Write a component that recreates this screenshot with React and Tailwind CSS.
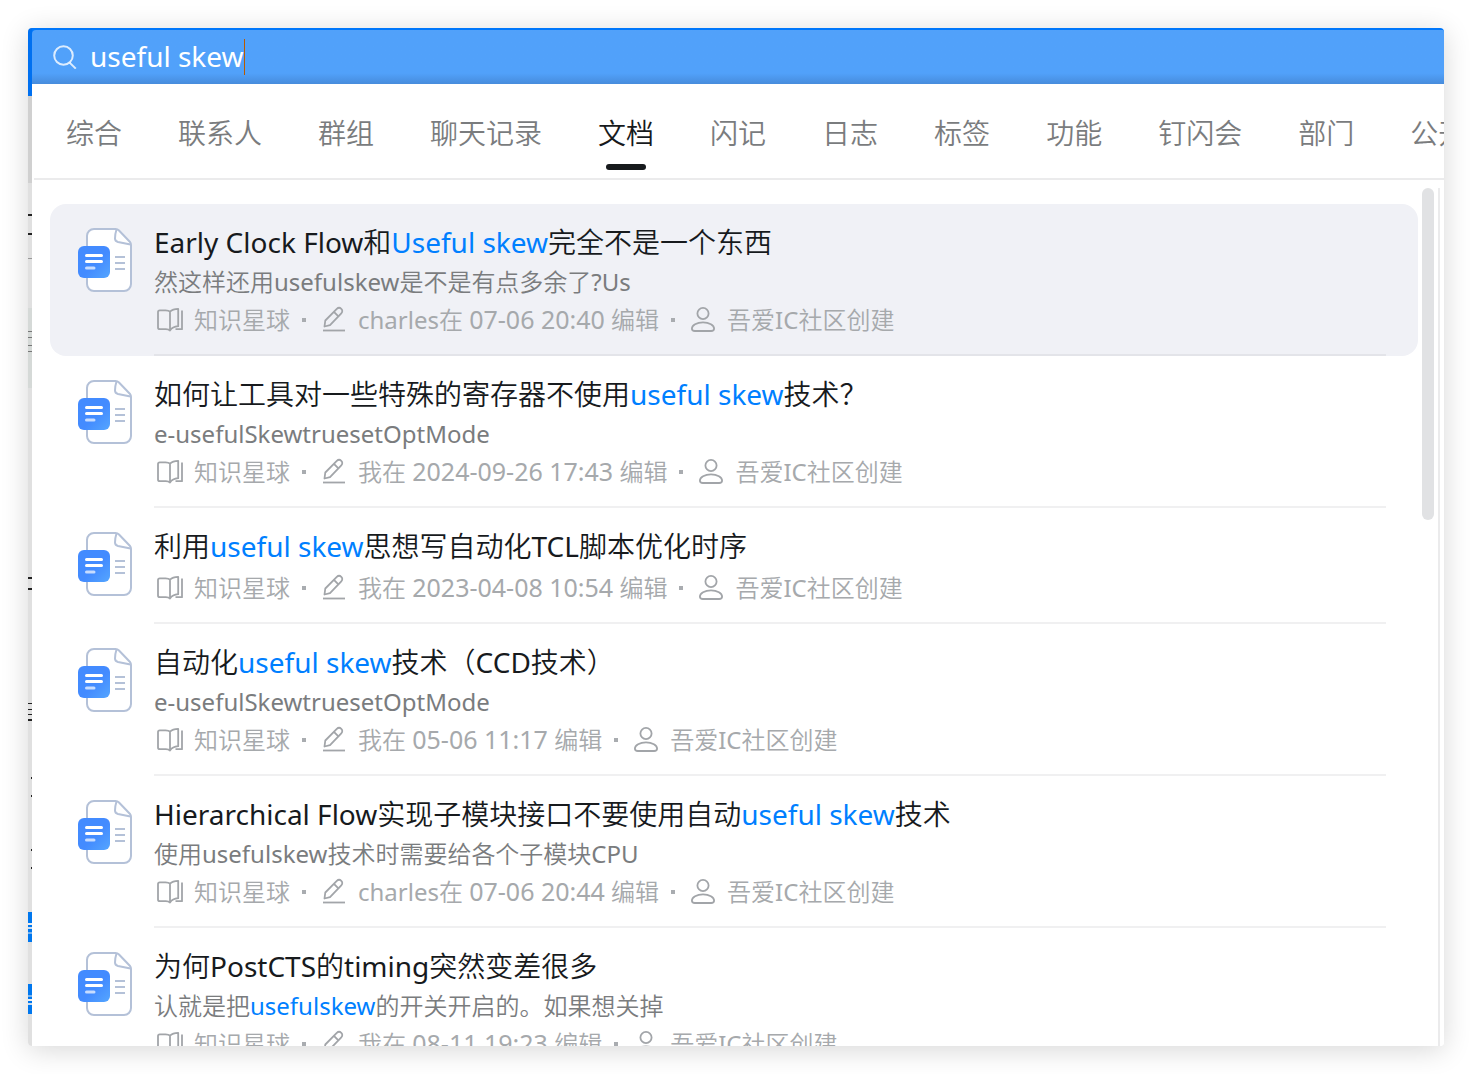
const LATIN_CJK = "font-['Noto_Sans','Noto_Sans_CJK_SC_DemiLight','Noto_Sans_CJK_SC',sans-serif]";

const tabs = ['综合', '联系人', '群组', '聊天记录', '文档', '闪记', '日志', '标签', '功能', '钉闪会', '部门', '公开群'];

const results = [
  {
    title: ['Early Clock Flow和', 'Useful skew', '完全不是一个东西'],
    snippet: ['然这样还用usefulskew是不是有点多余了?Us'],
    editor: 'charles在',
    time: '07-06 20:40',
    active: true,
  },
  {
    title: ['如何让工具对一些特殊的寄存器不使用', 'useful skew', '技术？'],
    snippet: ['e-usefulSkewtruesetOptMode'],
    editor: '我在',
    time: '2024-09-26 17:43',
  },
  {
    title: ['利用', 'useful skew', '思想写自动化TCL脚本优化时序'],
    editor: '我在',
    time: '2023-04-08 10:54',
  },
  {
    title: ['自动化', 'useful skew', '技术（CCD技术）'],
    snippet: ['e-usefulSkewtruesetOptMode'],
    editor: '我在',
    time: '05-06 11:17',
  },
  {
    title: ['Hierarchical Flow实现子模块接口不要使用自动', 'useful skew', '技术'],
    snippet: ['使用usefulskew技术时需要给各个子模块CPU'],
    editor: 'charles在',
    time: '07-06 20:44',
  },
  {
    title: ['为何PostCTS的timing突然变差很多'],
    snippet: ['认就是把', 'usefulskew', '的开关开启的。如果想关掉'],
    editor: '我在',
    time: '08-11 19:23',
  },
];

function SearchIcon() {
  return (
    <svg className="size-6 shrink-0" viewBox="0 0 24 24" fill="none" stroke="#fff" strokeOpacity="0.8" strokeWidth="2" aria-hidden="true">
      <circle cx="10.5" cy="10.5" r="9.3" />
      <path d="M16.6 17.6l6.2 6" />
    </svg>
  );
}

function DocIcon({ id }) {
  return (
    <svg className="h-16 w-14 shrink-0" viewBox="0 0 56 64" aria-hidden="true">
      <defs>
        <linearGradient id={id} x1="0" y1="0" x2="1" y2="1">
          <stop offset="0.55" stopColor="#438bff" />
          <stop offset="1" stopColor="#55a6ff" />
        </linearGradient>
      </defs>
      <path d="M16 1H37.500Q39.500 1 41 2.500L52 14Q53 15.200 53 17V56a7 7 0 0 1-7 7H16a7 7 0 0 1-7-7V8a7 7 0 0 1 7-7Z" fill="#fff" stroke="#b4c1d8" strokeWidth="2" />
      <path d="M38.500 1.500C37.500 4.500 37 7 37 10.500C37 12.500 38 13.500 40 14L52.500 16.500" fill="none" stroke="#b4c1d8" strokeWidth="2" strokeLinejoin="round" />
      <path d="M37 29h10M37 35h10M37 41h10" stroke="#b4c1d8" strokeWidth="2" />
      <rect y="18" width="32" height="32" rx="6" fill={`url(#${id})`} />
      <path d="M8.500 27.500h15M8.500 33.500h15" stroke="#fff" strokeWidth="3" strokeLinecap="round" />
      <path d="M8.500 40h7.500" stroke="#fff" strokeOpacity="0.7" strokeWidth="3" strokeLinecap="round" />
    </svg>
  );
}

const metaIcon = 'size-7 shrink-0';

function BookIcon() {
  return (
    <svg className={metaIcon} viewBox="0 0 28 28" fill="none" stroke="#a2a5a9" strokeWidth="1.800" strokeLinejoin="round" aria-hidden="true">
      <path d="M14 5.700c-1-1-2.500-1.300-4.500-1.300H3.800c-1 0-1.800.6-1.800 1.600v15.500c0 1 .8 1.700 1.800 1.700h6c1.800 0 3.200.3 4.200 1.300" />
      <path d="M14 5.700c1.800-1.800 4.600-2.700 8.200-2.800v17.300c-3.600.3-6.400 1.500-8.200 4.300Z" />
      <path d="M26 4.500v18.700h-6.500" />
    </svg>
  );
}

function PencilIcon() {
  return (
    <svg className={metaIcon} viewBox="0 0 28 28" fill="none" stroke="#a2a5a9" strokeWidth="1.800" strokeLinejoin="round" aria-hidden="true">
      <path d="M4.500 20.500l.8-6L16.800 2.900c1.400-1.400 3.200-1.300 4.500-.1s1.300 3.100 0 4.500L10 19.100Z" />
      <path d="M13.900 5.900l4.500 4.500" />
      <path d="M3 24.500h22" />
    </svg>
  );
}

function PersonIcon() {
  return (
    <svg className={metaIcon} viewBox="0 0 28 28" fill="none" stroke="#a2a5a9" strokeWidth="1.800" aria-hidden="true">
      <circle cx="14" cy="7.500" r="5.600" />
      <path d="M14 16.300c-6.300 0-11.100 3-11.100 6.200 0 1.800 1.400 2.500 3 2.500h16.200c1.600 0 3-.7 3-2.500 0-3.200-4.800-6.200-11.100-6.200Z" />
    </svg>
  );
}

function Highlighted({ parts }) {
  return parts.map((part, i) =>
    i === 1 ? (
      <mark key={i} className="bg-transparent text-[#007fff]">{part}</mark>
    ) : (
      <span key={i}>{part}</span>
    ),
  );
}

function Dot() {
  return <span className="mr-3.5 ml-3 size-1 shrink-0 bg-[#a9acb0]" />;
}

function ResultItem({ item, index }) {
  return (
    <li>
      <a href="#result" className={`flex gap-5 rounded-2xl pr-8 pl-7 ${item.active ? 'bg-[#f0f1f6]' : ''}`}>
        <span className="pt-6">
          <DocIcon id={`doc-fill-${index}`} />
        </span>
        <span className={`flex min-w-0 grow flex-col border-b-2 pt-4.5 pb-3.5 ${item.active ? 'border-[#e3e4e9]' : 'border-[#f0f0f1]'}`}>
          <span className="mb-0.5 truncate text-[28px] leading-10 text-[#171a1d]">
            <Highlighted parts={item.title} />
          </span>
          {item.snippet && (
            <span className="truncate text-2xl leading-9 text-[#7a7c7e]">
              <Highlighted parts={item.snippet} />
            </span>
          )}
          <span className="ml-0.5 flex h-10 items-center text-2xl whitespace-nowrap text-[#a6a9ac]">
            <BookIcon />
            <span className="ml-2.5">知识星球</span>
            <Dot />
            <PencilIcon />
            <span className="ml-2.5">
              {item.editor} <time className="text-[25px]">{item.time}</time> 编辑
            </span>
            <Dot />
            <PersonIcon />
            <span className="ml-2.5">吾爱IC社区创建</span>
          </span>
        </span>
      </a>
    </li>
  );
}

const stripMarks = [
  'top-[186px] h-0.5 bg-[#222]',
  'top-[205px] h-0.5 bg-[#222]',
  'top-[230px] h-px bg-[#999]',
  'top-[280px] h-20 bg-[#d5d9d7]',
  'top-[303px] h-px bg-[#777]',
  'top-[309px] h-px bg-[#777]',
  'top-[317px] h-px bg-[#777]',
  'top-[323px] h-px bg-[#777]',
  'top-[549px] h-0.5 bg-[#222]',
  'top-[560px] h-0.5 bg-[#222]',
  'top-[675px] h-px bg-[#222]',
  'top-[681px] h-px bg-[#222]',
  'top-[686px] h-px bg-[#222]',
  'top-[691px] h-0.5 bg-[#222]',
  'top-[884px] h-[30px] bg-[#0077ee]',
  'top-[895px] h-0.5 bg-[#eee]',
  'top-[899px] h-0.5 bg-[#cde]',
  'top-[904px] h-0.5 bg-[#7ab4ee]',
  'top-[956px] h-[30px] bg-[#0077ee]',
  'top-[967px] h-0.5 bg-[#7ab4ee]',
  'top-[971px] h-0.5 bg-[#eee]',
  'top-[975px] h-0.5 bg-[#cde]',
];

const stripDots = ['top-[749px]', 'top-[767px]', 'top-[821px]', 'top-[839px]'];

function BackgroundStrip() {
  return (
    <div className="relative w-1 shrink-0 bg-[#e0e0e0]" aria-hidden="true">
      <div className="h-[68px] bg-[#0070f0]" />
      <div className="h-[87px] bg-[#d0d0d0]" />
      {stripMarks.map((mark) => (
        <div key={mark} className={`absolute inset-x-0 ${mark}`} />
      ))}
      {stripDots.map((dot) => (
        <div key={dot} className={`absolute right-0 h-0.5 w-px bg-[#222] ${dot}`} />
      ))}
    </div>
  );
}

export default function App() {
  return (
    <div className={`h-screen bg-white p-7 ${LATIN_CJK}`}>
      <div className="flex h-full overflow-hidden rounded-sm shadow-[0_4px_28px_rgba(0,0,0,0.16)]">
        <BackgroundStrip />
        <main className="flex min-w-0 grow flex-col bg-white">
          <div className="shrink-0 bg-[#0077fb] pt-0.5">
            <label className="flex h-[54px] items-center rounded-tl-sm bg-[#51a1fa] bg-linear-to-t from-[#478cdc] to-[#51a1fa] to-20% pl-[21px]">
              <SearchIcon />
              <input
                type="text"
                aria-label="搜索"
                defaultValue="useful skew"
                className="ml-[13px] pb-0.5 [field-sizing:content] text-[28px] text-white outline-none"
              />
              <span className="h-9 w-px shrink-0 bg-[#b85a00]" />
            </label>
          </div>
          <nav className="ml-0.5 flex h-24 shrink-0 gap-14 overflow-hidden border-b-2 border-[#ebebec] pl-8 text-[28px] whitespace-nowrap text-[#7a7c7e]">
            {tabs.map((tab) => (
              <button
                key={tab}
                type="button"
                className={
                  tab === '文档'
                    ? 'relative shrink-0 pt-1 text-[#171a1d] after:absolute after:inset-x-2 after:bottom-2 after:h-1.5 after:rounded-full after:bg-[#171a1d]'
                    : 'shrink-0 pt-1'
                }
              >
                {tab}
              </button>
            ))}
          </nav>
          <div className="flex min-h-0 grow pt-2 pr-1">
            <ul className="min-w-0 grow overflow-hidden pt-4 pl-[18px]">
              {results.map((item, i) => (
                <ResultItem key={item.time} item={item} index={i} />
              ))}
            </ul>
            <div className="mx-1 h-[332px] w-3 shrink-0 rounded-full bg-[#e1e2e4]" />
            <div className="w-0.5 shrink-0 bg-[#ebebec]" />
          </div>
        </main>
      </div>
    </div>
  );
}
